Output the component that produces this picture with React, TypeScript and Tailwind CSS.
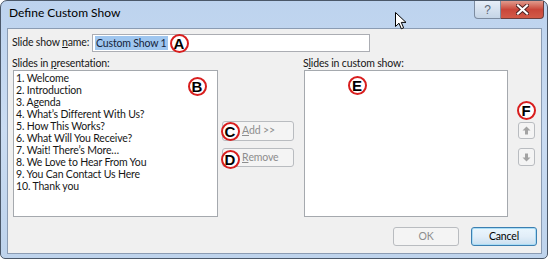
import React from "react";

const slides = [
  "1. Welcome",
  "2. Introduction",
  "3. Agenda",
  "4. What’s Different With Us?",
  "5. How This Works?",
  "6. What Will You Receive?",
  "7. Wait! There’s More…",
  "8. We Love to Hear From You",
  "9. You Can Contact Us Here",
  "10. Thank you",
];

function Badge({ letter, x, y }: { letter: string; x: number; y: number }) {
  return (
    <div
      className="absolute w-[19px] h-[19px] rounded-full bg-white border-[2px] border-[#d81e1e] flex items-center justify-center text-[15px] leading-none font-bold text-black font-['Liberation_Sans',sans-serif] tracking-normal"
      style={{ left: x - 9.5, top: y - 9.5 }}
    >
      {letter}
    </div>
  );
}

function Arrow({ up }: { up: boolean }) {
  return (
    <svg width="9" height="9" viewBox="0 0 9 9">
      {up ? (
        <path d="M4.5 0.5 L8.5 4.5 L6 4.5 L6 8.5 L3 8.5 L3 4.5 L0.5 4.5 Z" fill="#a3a3a3" />
      ) : (
        <path d="M4.5 8.5 L8.5 4.5 L6 4.5 L6 0.5 L3 0.5 L3 4.5 L0.5 4.5 Z" fill="#a3a3a3" />
      )}
    </svg>
  );
}

export default function App() {
  return (
    <div className="w-[550px] h-[261px] bg-white relative overflow-hidden font-['Lato',sans-serif] text-[10.5px] tracking-[-0.15px] text-[#161616]">
      <div className="w-[548px] h-[259px] rounded-t-[7px] rounded-b-[5px] border border-[#4b5869] bg-gradient-to-b from-[#bdd3ee] via-[#cadcf2] to-[#bed3ec] flex flex-col">
        {/* title bar */}
        <div className="h-[27px] flex items-start justify-between">
          <div className="pl-[8px] pt-[4px] text-[12px] tracking-normal leading-[16px] text-black">Define Custom Show</div>
          <div className="flex mr-[3px]">
            <div className="w-[27px] h-[18px] rounded-bl-[4px] border border-t-0 border-[#7c8ba0] bg-gradient-to-b from-[#e6eef8] to-[#c5d4e6] flex items-center justify-center text-[12px] leading-none text-[#5b6675] font-['Liberation_Sans',sans-serif]">
              ?
            </div>
            <div className="w-[43px] h-[18px] rounded-br-[4px] border border-t-0 border-l-0 border-[#6b3d3d] bg-gradient-to-b from-[#e09a8d] via-[#c9463a] to-[#d25a48] flex items-center justify-center">
              <svg width="13" height="11" viewBox="0 0 13 11">
                <path d="M2 1.5 L11 9.5 M11 1.5 L2 9.5" stroke="#4a2020" strokeWidth="4" strokeLinecap="square" />
                <path d="M2 1.5 L11 9.5 M11 1.5 L2 9.5" stroke="#ffffff" strokeWidth="2.2" strokeLinecap="square" />
              </svg>
            </div>
          </div>
        </div>
        {/* client */}
        <div className="ml-[6px] mr-[5px] h-[226px] border border-[#8b9cb3] bg-[#f0f0f0] flex flex-col pl-[4px] pt-[5px]">
          <div className="h-[18px] flex items-center">
            <div className="w-[80px] whitespace-nowrap">
              Slide show <span className="underline">n</span>ame:
            </div>
            <div className="w-[278px] h-[18px] border border-[#abadb3] bg-white flex items-center pl-[2px]">
              <span className="bg-[#9fc6ef] text-[#13233a] leading-[14px] px-[1px]">Custom Show 1</span>
            </div>
          </div>
          <div className="mt-[5px] h-[13px] flex items-center leading-[13px]">
            <div className="w-[291px] whitespace-nowrap">
              Slides in <span className="underline">p</span>resentation:
            </div>
            <div className="whitespace-nowrap">
              S<span className="underline">l</span>ides in custom show:
            </div>
          </div>
          <div className="h-[147px] flex">
            <div className="ml-[1px] w-[205px] h-[147px] border border-[#a5a9ae] bg-white pl-[2px] pt-[1px]">
              {slides.map((s) => (
                <div key={s} className="leading-[12px] h-[12px] whitespace-nowrap">
                  {s}
                </div>
              ))}
            </div>
            <div className="ml-[4px] w-[72px] flex flex-col pt-[51px]">
              <div className="h-[20px] rounded-[3px] border border-[#b9bcc0] bg-[#f4f4f4] text-[#8d8d8d] flex items-center pl-[19px]">
                <span className="underline">A</span>dd &gt;&gt;
              </div>
              <div className="mt-[7px] h-[19px] rounded-[3px] border border-[#b9bcc0] bg-[#f4f4f4] text-[#8d8d8d] flex items-center pl-[19px]">
                <span className="underline">R</span>emove
              </div>
            </div>
            <div className="ml-[10px] w-[204px] h-[147px] border border-[#a5a9ae] bg-white"></div>
            <div className="ml-[10px] w-[17px] flex flex-col pt-[52px]">
              <div className="h-[17px] rounded-[3px] border border-[#b9bcc0] bg-[#f4f4f4] flex items-center justify-center">
                <Arrow up={true} />
              </div>
              <div className="mt-[9px] h-[18px] rounded-[3px] border border-[#b9bcc0] bg-[#f4f4f4] flex items-center justify-center">
                <Arrow up={false} />
              </div>
            </div>
          </div>
          <div className="mt-[10px] flex justify-end pr-[4px]">
            <div className="w-[66px] h-[19px] rounded-[3px] border border-[#b9bcc0] bg-[#f4f4f4] text-[#8d8d8d] flex items-center justify-center">
              OK
            </div>
            <div className="ml-[12px] w-[66px] h-[19px] rounded-[3px] border border-[#3c7fb1] bg-gradient-to-b from-[#eaf6fd] via-[#e2eef8] to-[#c9dff0] text-black flex items-center justify-center shadow-[inset_0_0_0_1px_#a9dcf5]">
              Cancel
            </div>
          </div>
        </div>
      </div>

      <Badge letter="A" x={179} y={43} />
      <Badge letter="B" x={197} y={86} />
      <Badge letter="C" x={230} y={131} />
      <Badge letter="D" x={230} y={159} />
      <Badge letter="E" x={357} y={85} />
      <Badge letter="F" x={526} y={110} />

      <svg className="absolute left-[395px] top-[12px]" width="12" height="18" viewBox="0 0 12 18">
        <path d="M0.5 0.5 L0.5 14.5 L4 11.2 L6.3 16.8 L8.6 15.8 L6.3 10.4 L11 10.4 Z" fill="#ffffff" stroke="#000000" strokeWidth="1" strokeLinejoin="round" />
      </svg>
    </div>
  );
}
